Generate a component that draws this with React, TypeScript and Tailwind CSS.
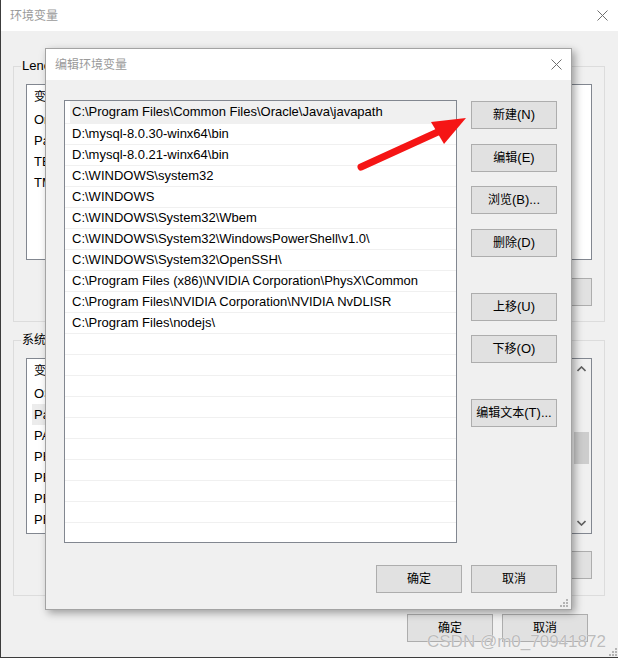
import React from 'react'

const paths = [
  'C:\\Program Files\\Common Files\\Oracle\\Java\\javapath',
  'D:\\mysql-8.0.30-winx64\\bin',
  'D:\\mysql-8.0.21-winx64\\bin',
  'C:\\WINDOWS\\system32',
  'C:\\WINDOWS',
  'C:\\WINDOWS\\System32\\Wbem',
  'C:\\WINDOWS\\System32\\WindowsPowerShell\\v1.0\\',
  'C:\\WINDOWS\\System32\\OpenSSH\\',
  'C:\\Program Files (x86)\\NVIDIA Corporation\\PhysX\\Common',
  'C:\\Program Files\\NVIDIA Corporation\\NVIDIA NvDLISR',
  'C:\\Program Files\\nodejs\\',
]

const userVars = ['OneDrive', 'Path', 'TEMP', 'TMP']
const sysVars = ['OS', 'Path', 'PATHEXT', 'PHP_HOME', 'PROCESSOR_ARCHITECTURE', 'PROCESSOR_IDENTIFIER', 'PROCESSOR_LEVEL']

interface BtnProps {
  zh: string
  en?: string
  className?: string
}

const Btn: React.FC<BtnProps> = ({ zh, en, className = '' }) => {
  return (
    <button
      className={`w-[86px] h-[28px] shrink-0 border border-[#adadad] bg-[#e1e1e1] flex items-center justify-center text-[13px] text-black ${className}`}
    >
      <span className="text-[12px]">{zh}</span>
      {en}
    </button>
  )
}

const CloseX = () => (
  <svg width="11" height="11" viewBox="0 0 11 11">
    <path d="M0.5 0.5L10.5 10.5M10.5 0.5L0.5 10.5" stroke="#6f6f6f" strokeWidth="1" fill="none" />
  </svg>
)

const Grip = () => (
  <svg width="8" height="8" viewBox="0 0 8 8">
    <rect x="6" y="0" width="2" height="2" fill="#b4b4b4" />
    <rect x="3" y="3" width="2" height="2" fill="#b4b4b4" />
    <rect x="6" y="3" width="2" height="2" fill="#b4b4b4" />
    <rect x="0" y="6" width="2" height="2" fill="#b4b4b4" />
    <rect x="3" y="6" width="2" height="2" fill="#b4b4b4" />
    <rect x="6" y="6" width="2" height="2" fill="#b4b4b4" />
  </svg>
)

const Chevron = ({ up }: { up?: boolean }) => (
  <svg width="9" height="6" viewBox="0 0 9 6">
    <path d={up ? 'M0.5 5L4.5 1L8.5 5' : 'M0.5 1L4.5 5L8.5 1'} stroke="#606060" strokeWidth="1.6" fill="none" />
  </svg>
)

export default function App() {
  return (
    <div className="relative w-[618px] h-[659px] overflow-hidden bg-white font-['Liberation_Sans','Noto_Sans_CJK_SC',sans-serif] text-[13px] text-black">
      {/* background window: 环境变量 */}
      <div className="w-[618px] h-[658px] bg-[#f0f0f0] border-l border-b border-[#3c3c3c] flex flex-col">
        <div className="h-[31px] bg-white flex items-center justify-between pl-[9px] pr-[10px]">
          <span className="text-[12px] text-[#9a9a9a]">环境变量</span>
          <CloseX />
        </div>

        <fieldset className="mt-[27px] ml-[12px] w-[592px] h-[264px] border border-[#dcdcdc] flex flex-col">
          <legend className="ml-[7px] px-[1px] leading-[16px]">Lenovo 的用户变量(U)</legend>
          <div className="px-[12px] pb-[18px] flex flex-col">
            <div className="mt-[10px] h-[176px] border border-[#828790] bg-white">
              <div className="h-[24px] flex items-center pl-[7px]">
                <span className="w-[120px] text-[12px]">变量</span>
                <span className="text-[12px]">值</span>
              </div>
              {userVars.map((v) => (
                <div key={v} className="h-[21px] flex items-center pl-[7px]">
                  {v}
                </div>
              ))}
            </div>
            <div className="mt-[18px] flex justify-end gap-[10px]">
              <Btn zh="新建" en="(N)..." />
              <Btn zh="编辑" en="(E)..." />
              <Btn zh="删除" en="(D)" />
            </div>
          </div>
        </fieldset>

        <fieldset className="mt-[10px] ml-[12px] w-[592px] h-[264px] border border-[#dcdcdc] flex flex-col">
          <legend className="ml-[7px] px-[1px] leading-[16px] text-[12px]">系统变量(S)</legend>
          <div className="px-[12px] flex flex-col">
            <div className="mt-[10px] h-[176px] border border-[#828790] bg-white flex">
              <div className="flex-1">
                <div className="h-[24px] flex items-center pl-[7px]">
                  <span className="w-[120px] text-[12px]">变量</span>
                  <span className="text-[12px]">值</span>
                </div>
                {sysVars.map((v) =>
                  v === 'Path' ? (
                    <div key={v} className="h-[21px] pl-[5px]">
                      <div className="h-full bg-[#ececec] flex items-center pl-[2px]">{v}</div>
                    </div>
                  ) : (
                    <div key={v} className="h-[21px] flex items-center pl-[7px]">
                      {v}
                    </div>
                  )
                )}
              </div>
              <div className="w-[19px] bg-[#f0f0f0] flex flex-col items-center">
                <div className="h-[20px] flex items-center justify-center">
                  <Chevron up />
                </div>
                <div className="mt-[53px] w-[15px] h-[32px] bg-[#cdcdcd]" />
                <div className="mt-auto h-[20px] flex items-center justify-center">
                  <Chevron />
                </div>
              </div>
            </div>
            <div className="mt-[17px] flex justify-end gap-[10px]">
              <Btn zh="新建" en="(W)..." />
              <Btn zh="编辑" en="(I)..." />
              <Btn zh="删除" en="(L)" />
            </div>
          </div>
        </fieldset>

        <div className="mt-[18px] flex justify-end gap-[9px] pr-[30px]">
          <Btn zh="确定" />
          <Btn zh="取消" />
        </div>
        <div className="mt-auto flex justify-end pr-[1px] pb-[1px]">
          <Grip />
        </div>
      </div>

      {/* foreground dialog: 编辑环境变量 */}
      <div className="absolute left-[45px] top-[48px] w-[527px] h-[562px] bg-[#f0f0f0] border border-[#a3a3a3] shadow-[3px_3px_8px_rgba(0,0,0,0.35)] flex flex-col">
        <div className="h-[31px] bg-white flex items-center justify-between pl-[9px] pr-[9px]">
          <span className="text-[12px] text-[#9a9a9a]">编辑环境变量</span>
          <CloseX />
        </div>
        <div className="mt-[20px] ml-[18px] flex">
          <div className="w-[393px] h-[443px] border border-[#828790] bg-white overflow-hidden">
            {Array.from({ length: 22 }).map((_, i) =>
              i === 0 ? (
                <div key={i} className="h-[23px] pl-[5px] border-b border-[#f0f0f0]">
                  <div className="h-full bg-[#f0f0f0] flex items-center pl-[2px] whitespace-nowrap">{paths[0]}</div>
                </div>
              ) : (
                <div key={i} className="h-[21px] border-b border-[#f0f0f0] flex items-center pl-[7px] whitespace-nowrap">
                  {paths[i] ?? ''}
                </div>
              )
            )}
          </div>
          <div className="ml-[14px] flex flex-col">
            <Btn zh="新建" en="(N)" className="mt-[1px]" />
            <Btn zh="编辑" en="(E)" className="mt-[15px]" />
            <Btn zh="浏览" en="(B)..." className="mt-[14px]" />
            <Btn zh="删除" en="(D)" className="mt-[15px]" />
            <Btn zh="上移" en="(U)" className="mt-[36px]" />
            <Btn zh="下移" en="(O)" className="mt-[14px]" />
            <Btn zh="编辑文本" en="(T)..." className="mt-[36px]" />
          </div>
        </div>
        <div className="mt-[22px] flex justify-end gap-[9px] pr-[14px]">
          <Btn zh="确定" />
          <Btn zh="取消" />
        </div>
        <div className="absolute right-[3px] bottom-[2px]">
          <Grip />
        </div>
      </div>

      {/* red annotation arrow */}
      <svg className="absolute left-0 top-0 pointer-events-none" width="618" height="659" viewBox="0 0 618 659">
        <line x1="361" y1="167" x2="440" y2="131" stroke="#f51515" strokeWidth="7" strokeLinecap="round" />
        <polygon points="466,118 431,122 444,144" fill="#f51515" />
      </svg>

      {/* watermark */}
      <div className="absolute left-[427px] top-[631px] text-[17px] leading-[22px] text-[#bcbcbc] [text-shadow:0_0_1px_#ffffff] whitespace-nowrap">
        CSDN @m0_70941872
      </div>
    </div>
  )
}
